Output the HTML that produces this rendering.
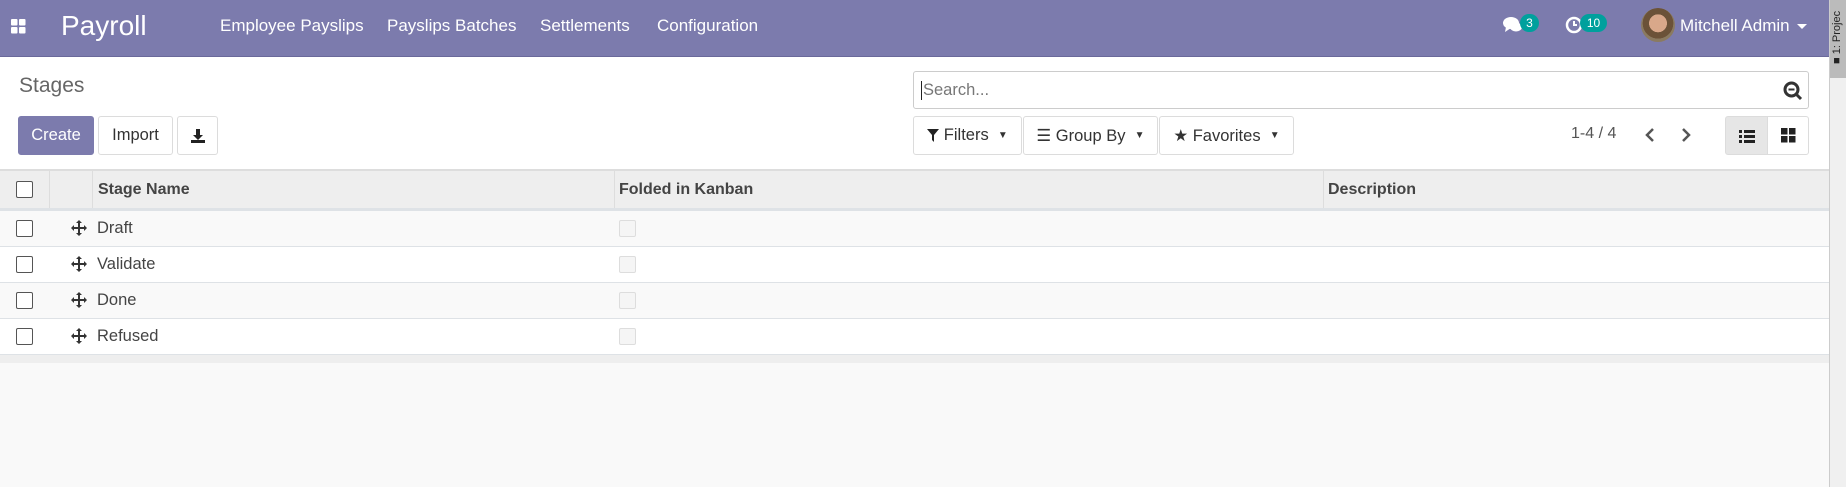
<!DOCTYPE html>
<html><head><meta charset="utf-8"><style>
*{box-sizing:border-box;margin:0;padding:0}
body{width:1846px;height:487px;overflow:hidden;background:#fff;font-family:"Liberation Sans",sans-serif;color:#4c4c4c;position:relative}
.abs{position:absolute}
.nav{left:0;top:0;width:1829px;height:57px;background:#7c7bad;border-bottom:1px solid #6a699a;color:#fff}
.nav .m{position:absolute;top:16px;font-size:17px}
.side{left:1829px;top:0;width:17px;height:487px;background:#f0f0f0;border-left:1px solid #ccc}
.btn{position:absolute;height:39px;border:1px solid #dcdcdc;border-radius:3px;background:#fff;font-size:16.5px;color:#333;display:flex;align-items:center;justify-content:center}
.badge{position:absolute;background:#00a09d;color:#fff;font-size:12px;border-radius:9px;height:18px;text-align:center;line-height:18px}
.row{position:absolute;left:0;width:1829px;height:36px;border-bottom:1px solid #dee2e6;font-size:16.5px;color:#444}
.cb{position:absolute;width:17px;height:17px;border:1.5px solid #555;border-radius:2px;background:#fff}
.fcb{position:absolute;left:619px;top:9px;width:17px;height:17px;border:1px solid #ddd;border-radius:2px;background:#f5f5f5}
.mv{position:absolute;left:71px;top:9px}
</style></head><body>
<svg width="0" height="0" style="position:absolute"><defs><symbol id="mv" viewBox="0 0 16 16"><path d="M8 0l3 3H9v4h4V5l3 3-3 3V9H9v4h2l-3 3-3-3h2V9H3v2L0 8l3-3v2h4V3H5z" fill="#333"/></symbol></defs></svg>
<div class="abs nav">
 <svg class="abs" style="left:11px;top:19px" width="15" height="15" viewBox="0 0 15 15" fill="#fff"><rect x="0" y="0" width="6.5" height="6.5" rx="1"/><rect x="8" y="0" width="6.5" height="6.5" rx="1"/><rect x="0" y="8" width="6.5" height="6.5" rx="1"/><rect x="8" y="8" width="6.5" height="6.5" rx="1"/></svg>
 <div class="abs" style="left:61px;top:10px;font-size:28px">Payroll</div>
 <div class="m" style="left:220px">Employee Payslips</div>
 <div class="m" style="left:387px">Payslips Batches</div>
 <div class="m" style="left:540px">Settlements</div>
 <div class="m" style="left:657px">Configuration</div>
 <svg class="abs" style="left:1503px;top:16px" width="20" height="18" viewBox="0 0 20 18" fill="#fff"><ellipse cx="8" cy="7" rx="8" ry="6"/><path d="M3 11 L2 16 L8 12Z"/><ellipse cx="13" cy="11" rx="6" ry="4.5"/></svg>
 <div class="badge" style="left:1520px;top:14px;width:19px">3</div>
 <svg class="abs" style="left:1565px;top:16px" width="18" height="18" viewBox="0 0 18 18"><circle cx="9" cy="9" r="7" fill="none" stroke="#fff" stroke-width="2.5"/><path d="M9 5v4h3" stroke="#fff" stroke-width="2" fill="none"/></svg>
 <div class="badge" style="left:1580px;top:14px;width:27px">10</div>
 <div class="abs" style="left:1641px;top:8px;width:34px;height:34px;border-radius:50%;background:radial-gradient(circle at 50% 45%,#d9a88a 0 35%,#6b5238 36% 60%,#8a7a60 61%)"></div>
 <div class="m" style="left:1680px">Mitchell Admin</div>
 <div class="abs" style="left:1797px;top:24px;border-left:5px solid transparent;border-right:5px solid transparent;border-top:5px solid #fff"></div>
</div>
<div class="abs side"><div style="height:78px;background:#bbb"></div>
 <div class="abs" style="left:1px;top:2px;transform:rotate(-90deg) translate(-62px,0);transform-origin:0 0;font-size:11px;color:#222;white-space:nowrap;width:60px">&#9632; 1: Projec</div></div>
<div class="abs" style="left:19px;top:74px;font-size:21px;color:#666">Stages</div>
<div class="btn" style="left:18px;top:116px;width:76px;background:#7c7bad;border-color:#7c7bad;color:#fff">Create</div>
<div class="btn" style="left:98px;top:116px;width:75px">Import</div>
<div class="btn" style="left:177px;top:116px;width:41px"><svg width="16" height="16" viewBox="0 0 16 16" fill="#222"><path d="M6 1h4v6h3l-5 5-5-5h3z"/><rect x="1" y="12" width="14" height="3"/></svg></div>
<div class="abs" style="left:913px;top:71px;width:896px;height:38px;border:1px solid #ccc;border-radius:3px"><div class="abs" style="left:7px;top:9px;font-size:16.5px;color:#777;border-left:1px solid #222;padding-left:1px">Search...</div>
<svg class="abs" style="right:5px;top:9px" width="20" height="20" viewBox="0 0 20 20"><circle cx="8.5" cy="8.5" r="6.5" fill="none" stroke="#333" stroke-width="3"/><path d="M13 13l5 5" stroke="#333" stroke-width="3"/><path d="M5.5 8.5h6" stroke="#333" stroke-width="2"/></svg></div>
<div class="btn" style="left:913px;top:116px;width:109px"><svg width="12" height="13" viewBox="0 0 12 13" fill="#222"><path d="M0 0h12L7 6v7L5 11V6z"/></svg>&nbsp;Filters&nbsp;&nbsp;<span style="font-size:10px">▼</span></div>
<div class="btn" style="left:1023px;top:116px;width:135px">☰&nbsp;Group By&nbsp;&nbsp;<span style="font-size:10px">▼</span></div>
<div class="btn" style="left:1159px;top:116px;width:135px">★&nbsp;Favorites&nbsp;&nbsp;<span style="font-size:10px">▼</span></div>
<div class="abs" style="left:1571px;top:125px;font-size:16px;color:#555">1-4 / 4</div>
<svg class="abs" style="left:1644px;top:128px" width="12" height="14" viewBox="0 0 12 14"><path d="M9 1L3 7l6 6" stroke="#555" stroke-width="2.5" fill="none"/></svg>
<svg class="abs" style="left:1680px;top:128px" width="12" height="14" viewBox="0 0 12 14"><path d="M3 1l6 6-6 6" stroke="#555" stroke-width="2.5" fill="none"/></svg>
<div class="btn" style="left:1725px;top:116px;width:43px;background:#e6e6e6;border-radius:3px 0 0 3px"><svg width="16" height="14" viewBox="0 0 16 14" fill="#222"><rect x="0" y="1" width="3" height="3"/><rect x="5" y="1" width="11" height="3"/><rect x="0" y="6" width="3" height="3"/><rect x="5" y="6" width="11" height="3"/><rect x="0" y="11" width="3" height="3"/><rect x="5" y="11" width="11" height="3"/></svg></div>
<div class="btn" style="left:1767px;top:116px;width:42px;border-radius:0 3px 3px 0"><svg width="15" height="15" viewBox="0 0 15 15" fill="#222"><rect x="0" y="0" width="6.5" height="6.5"/><rect x="8" y="0" width="6.5" height="6.5"/><rect x="0" y="8" width="6.5" height="6.5"/><rect x="8" y="8" width="6.5" height="6.5"/></svg></div>
<div class="abs" style="left:0;top:169px;width:1829px;height:42px;background:#eee;border-top:2px solid #ddd;border-bottom:3px solid #dee2e6;font-weight:bold;font-size:16px;color:#444">
 <div class="cb" style="left:16px;top:10px"></div>
 <div class="abs" style="left:49px;top:0;height:37px;border-left:1px solid #ddd"></div>
 <div class="abs" style="left:92px;top:0;height:37px;border-left:1px solid #ddd"></div>
 <div class="abs" style="left:614px;top:0;height:37px;border-left:1px solid #ddd"></div>
 <div class="abs" style="left:1323px;top:0;height:37px;border-left:1px solid #ddd"></div>
 <div class="abs" style="left:98px;top:10px">Stage Name</div>
 <div class="abs" style="left:619px;top:10px">Folded in Kanban</div>
 <div class="abs" style="left:1328px;top:10px">Description</div>
</div>
<div class="row" style="top:211px;background:#f9f9f9"><div class="cb" style="left:16px;top:9px"></div><svg class="mv" width="16" height="16"><use href="#mv"/></svg><div class="abs" style="left:97px;top:8px">Draft</div><div class="fcb"></div></div>
<div class="row" style="top:247px"><div class="cb" style="left:16px;top:9px"></div><svg class="mv" width="16" height="16"><use href="#mv"/></svg><div class="abs" style="left:97px;top:8px">Validate</div><div class="fcb"></div></div>
<div class="row" style="top:283px;background:#f9f9f9"><div class="cb" style="left:16px;top:9px"></div><svg class="mv" width="16" height="16"><use href="#mv"/></svg><div class="abs" style="left:97px;top:8px">Done</div><div class="fcb"></div></div>
<div class="row" style="top:319px"><div class="cb" style="left:16px;top:9px"></div><svg class="mv" width="16" height="16"><use href="#mv"/></svg><div class="abs" style="left:97px;top:8px">Refused</div><div class="fcb"></div></div>
<div class="abs" style="left:0;top:355px;width:1829px;height:8px;background:#eee"></div>
<div class="abs" style="left:0;top:363px;width:1829px;height:124px;background:#f9f9f9"></div>
</body></html>
